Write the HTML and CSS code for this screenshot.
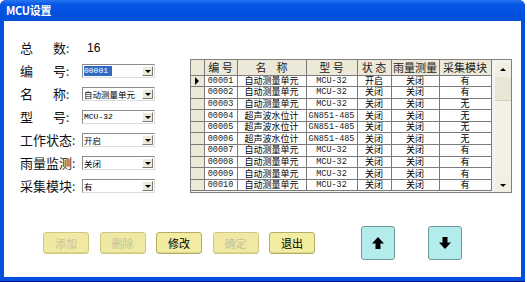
FILE: index.html
```html
<!DOCTYPE html>
<html lang="zh-CN">
<head>
    <meta charset="UTF-8">
    <title>MCU设置</title>
    <link rel="stylesheet" href="styles.css">
</head>
<body>
    <div class="window">
        <div class="titlebar">MCU设置</div>

        <div class="client">
            <div class="top">
                <div class="form">
                    <div class="form-row">
                        <span class="label two">总数</span><span class="colon">:</span>
                        <span class="total">16</span>
                    </div>
                    <div class="form-row">
                        <span class="label two">编号</span><span class="colon">:</span>
                        <div class="combo"><span class="value selected mono">00001</span><span class="drop"></span></div>
                    </div>
                    <div class="form-row">
                        <span class="label two">名称</span><span class="colon">:</span>
                        <div class="combo"><span class="value">自动测量单元</span><span class="drop"></span></div>
                    </div>
                    <div class="form-row">
                        <span class="label two">型号</span><span class="colon">:</span>
                        <div class="combo"><span class="value mono">MCU-32</span><span class="drop"></span></div>
                    </div>
                    <div class="form-row">
                        <span class="label">工作状态</span><span class="colon">:</span>
                        <div class="combo"><span class="value">开启</span><span class="drop"></span></div>
                    </div>
                    <div class="form-row">
                        <span class="label">雨量监测</span><span class="colon">:</span>
                        <div class="combo"><span class="value">关闭</span><span class="drop"></span></div>
                    </div>
                    <div class="form-row">
                        <span class="label">采集模块</span><span class="colon">:</span>
                        <div class="combo"><span class="value">有</span><span class="drop"></span></div>
                    </div>
                </div>

                <div class="grid">
                    <table class="data">
                        <colgroup>
                            <col class="c-sel"><col class="c-id"><col class="c-name"><col class="c-model">
                            <col class="c-state"><col class="c-rain"><col class="c-mod">
                        </colgroup>
                        <thead>
                            <tr><th></th><th>编&nbsp;号</th><th>名&nbsp;&nbsp;&nbsp;&nbsp;称</th><th>型&nbsp;号</th><th>状&nbsp;态</th><th>雨量测量</th><th>采集模块</th></tr>
                        </thead>
                        <tbody>
                            <tr><td class="sel"><span class="pointer"></span></td><td class="mono">00001</td><td>自动测量单元</td><td class="mono">MCU-32</td><td>开启</td><td>关闭</td><td>有</td></tr>
                            <tr><td class="sel"></td><td class="mono">00002</td><td>自动测量单元</td><td class="mono">MCU-32</td><td>关闭</td><td>关闭</td><td>有</td></tr>
                            <tr><td class="sel"></td><td class="mono">00003</td><td>自动测量单元</td><td class="mono">MCU-32</td><td>关闭</td><td>关闭</td><td>无</td></tr>
                            <tr><td class="sel"></td><td class="mono">00004</td><td>超声波水位计</td><td class="mono">GN851-485</td><td>关闭</td><td>关闭</td><td>无</td></tr>
                            <tr><td class="sel"></td><td class="mono">00005</td><td>超声波水位计</td><td class="mono">GN851-485</td><td>关闭</td><td>关闭</td><td>无</td></tr>
                            <tr><td class="sel"></td><td class="mono">00006</td><td>超声波水位计</td><td class="mono">GN851-485</td><td>关闭</td><td>关闭</td><td>无</td></tr>
                            <tr><td class="sel"></td><td class="mono">00007</td><td>自动测量单元</td><td class="mono">MCU-32</td><td>关闭</td><td>关闭</td><td>有</td></tr>
                            <tr><td class="sel"></td><td class="mono">00008</td><td>自动测量单元</td><td class="mono">MCU-32</td><td>关闭</td><td>关闭</td><td>有</td></tr>
                            <tr><td class="sel"></td><td class="mono">00009</td><td>自动测量单元</td><td class="mono">MCU-32</td><td>关闭</td><td>关闭</td><td>有</td></tr>
                            <tr><td class="sel"></td><td class="mono">00010</td><td>自动测量单元</td><td class="mono">MCU-32</td><td>关闭</td><td>关闭</td><td>有</td></tr>
                        </tbody>
                    </table>
                    <div class="vscroll">
                        <span class="sbtn up"></span>
                        <span class="thumb"></span>
                        <span class="track"></span>
                        <span class="sbtn down"></span>
                    </div>
                </div>
            </div>

            <div class="actions">
                <button class="btn" disabled>添加</button>
                <button class="btn" disabled>删除</button>
                <button class="btn">修改</button>
                <button class="btn" disabled>确定</button>
                <button class="btn">退出</button>
                <button class="arrow-btn" title="上移">
                    <svg width="14" height="14" viewBox="0 0 14 14"><path d="M7 1 L13 7.5 H9.5 V13 H4.5 V7.5 H1 Z" fill="#000"/></svg>
                </button>
                <button class="arrow-btn" title="下移">
                    <svg width="14" height="14" viewBox="0 0 14 14"><path d="M7 13 L13 6.5 H9.5 V1 H4.5 V6.5 H1 Z" fill="#000"/></svg>
                </button>
            </div>
        </div>
    </div>
</body>
</html>
```

FILE: styles.css
```css
* {
    margin: 0;
    padding: 0;
    box-sizing: border-box;
}

body {
    background-color: #fff;
    font-family: "Noto Sans CJK SC", "Liberation Sans", sans-serif;
    color: #000;
}

.window {
    width: 525px;
    height: 282px;
    background-color: #0350df;
    border-radius: 6px 6px 0 0;
    padding: 0 4px 4px 4px;
    border-bottom: 1px solid #00138c;
}

.titlebar {
    height: 21px;
    margin: 0 -4px;
    padding-left: 6px;
    border-radius: 6px 6px 0 0;
    background: linear-gradient(#2a76f2 0%, #0758e6 20%, #0350df 60%, #0551d8 100%);
    color: #fff;
    font-size: 11px;
    font-weight: bold;
    line-height: 21px;
    letter-spacing: -0.3px;
}

.client {
    height: 256px;
    background-color: #fff;
    padding-top: 15px;
}

.top {
    display: flex;
    height: 161px;
}

.form {
    width: 186px;
    padding-left: 16px;
}

.form-row {
    height: 23px;
    display: flex;
    align-items: center;
}

.label {
    width: 52px;
    font-size: 13px;
    line-height: 16px;
    white-space: nowrap;
    color: #111;
}

.label.two {
    width: 46px;
    text-align-last: justify;
}

.colon {
    width: 10px;
    font-size: 12px;
    color: #333;
}

.label.two + .colon {
    width: 16px;
}

.total {
    margin-left: 5px;
    font-family: "Liberation Sans", sans-serif;
    font-size: 12px;
}

.combo {
    width: 73px;
    height: 14px;
    border: 1px solid #8c8c8c;
    border-right-color: #dcdcdc;
    border-bottom-color: #dcdcdc;
    background-color: #fff;
    display: flex;
    align-items: center;
    padding: 0 1px;
}

.combo .value {
    flex: 1;
    font-size: 8.5px;
    line-height: 12px;
    white-space: nowrap;
}

.combo .value.selected {
    flex: 0 0 auto;
    line-height: 10px;
    background-color: #316ac5;
    color: #fff;
    padding-right: 4px;
    margin-right: auto;
}

.mono {
    font-family: "Liberation Mono", "Noto Sans CJK SC", monospace;
}

.combo .value.mono {
    font-size: 8px;
}

.drop {
    flex: 0 0 11px;
    height: 10px;
    background-color: #ece9d8;
    border: 1px solid #fff;
    border-right-color: #7a7a7a;
    border-bottom-color: #7a7a7a;
    position: relative;
}

.drop::after {
    content: "";
    position: absolute;
    left: 2px;
    top: 3px;
    border-left: 3px solid transparent;
    border-right: 3px solid transparent;
    border-top: 3px solid #000;
}

.grid {
    margin-top: 23px;
    width: 322px;
    height: 134px;
    border: 1px solid #808080;
    background-color: #f4f3ee;
    display: flex;
    justify-content: space-between;
    overflow: hidden;
}

.data {
    border-collapse: collapse;
    table-layout: fixed;
    width: 300px;
    align-self: flex-start;
}

.c-sel { width: 13px; }
.c-id { width: 33px; }
.c-name { width: 69px; }
.c-model { width: 51px; }
.c-state { width: 34px; }
.c-rain { width: 48px; }
.c-mod { width: 52px; }

.data th {
    height: 15px;
    background-color: #ece9d8;
    border: 1px solid #7a7a7a;
    border-top: none;
    font-size: 11px;
    font-weight: normal;
    line-height: 13px;
    white-space: nowrap;
    color: #222;
    padding: 0;
}

.data th:first-child {
    border-left: none;
}

.data td {
    height: 11.6px;
    background-color: #fff;
    border: 1px solid #7a7a7a;
    font-size: 9px;
    line-height: 10px;
    text-align: center;
    white-space: nowrap;
    padding: 0;
}

.data td:first-child {
    border-left: none;
}

.data td.mono {
    font-size: 8.5px;
    color: #222;
}

.data td.sel {
    background-color: #ece9d8;
    text-align: left;
}

.pointer {
    display: inline-block;
    margin-left: 4px;
    border-top: 4px solid transparent;
    border-bottom: 4px solid transparent;
    border-left: 4px solid #000;
    vertical-align: middle;
}

.vscroll {
    width: 16px;
    margin-top: 3px;
    display: flex;
    flex-direction: column;
    background-color: #f3f1e6;
}

.sbtn {
    height: 14px;
    background-color: #f1efe4;
    position: relative;
}

.sbtn::after {
    content: "";
    position: absolute;
    left: 5px;
    border-left: 3px solid transparent;
    border-right: 3px solid transparent;
}

.sbtn.up::after {
    top: 5px;
    border-bottom: 3px solid #000;
}

.sbtn.down::after {
    top: 6px;
    border-top: 3px solid #000;
}

.thumb {
    height: 24px;
    background-color: #e9e6d6;
    border-bottom: 1px solid #d5d1bc;
}

.track {
    flex: 1;
}

.actions {
    display: flex;
    align-items: center;
    height: 34px;
    padding-left: 39px;
    margin-top: 29px;
    gap: 10.5px;
}

.btn {
    width: 46px;
    height: 22px;
    border: 1px solid #b5ad66;
    border-radius: 3px;
    background-color: #f1ec9f;
    box-shadow: inset 0 -1px 0 #ddd78a;
    font-family: "Noto Sans CJK SC", sans-serif;
    font-size: 11px;
    color: #000;
}

.btn:disabled {
    color: #c4c39e;
    background-color: #efe9a3;
    border-color: #cfc784;
}

.arrow-btn {
    width: 34px;
    height: 34px;
    border: 1px solid #6b9a9a;
    border-radius: 3px;
    background-color: #b4ecec;
    display: flex;
    align-items: center;
    justify-content: center;
    margin-left: 35px;
}

.arrow-btn + .arrow-btn {
    margin-left: 22.5px;
}
```
